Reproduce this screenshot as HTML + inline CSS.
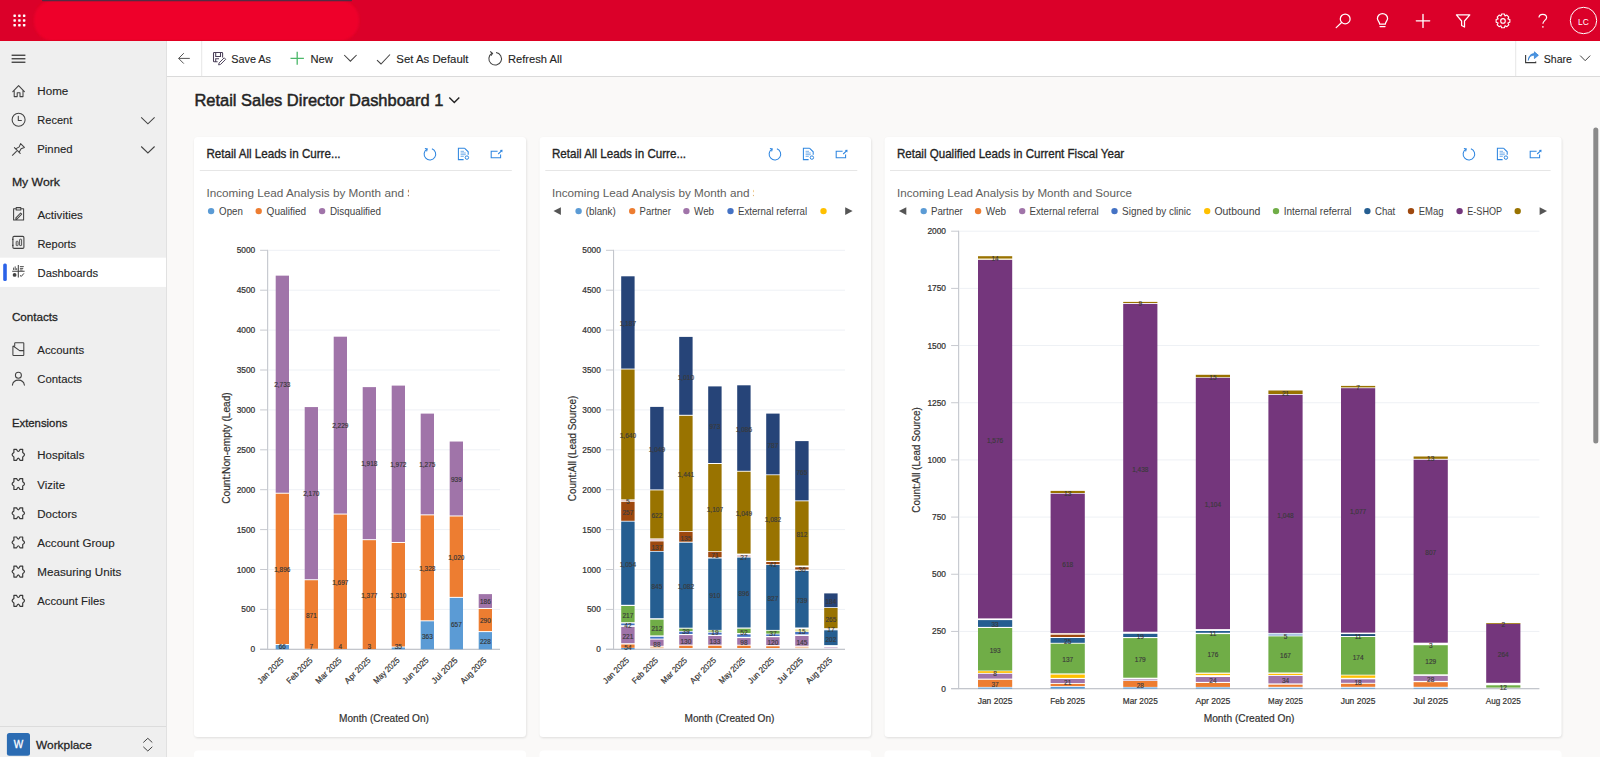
<!DOCTYPE html>
<html><head><meta charset="utf-8"><title>Dashboard</title>
<style>html,body{margin:0;padding:0;width:1600px;height:757px;overflow:hidden;background:#faf9f8}svg{display:block}text{font-family:"Liberation Sans",sans-serif}</style></head>
<body><svg width="1600" height="757" viewBox="0 0 1600 757" font-family="Liberation Sans, sans-serif"><defs><filter id="bl" x="-10%" y="-50%" width="120%" height="200%"><feGaussianBlur stdDeviation="1.2"/></filter><filter id="sh" x="-5%" y="-5%" width="110%" height="110%"><feGaussianBlur stdDeviation="1.2"/></filter></defs>
<rect x="0.00" y="0.00" width="1600.00" height="757.00" fill="#faf9f8"/>
<rect x="0.00" y="0.00" width="1600.00" height="41.00" fill="#db0029"/>
<rect x="34" y="0" width="325" height="41" rx="20" fill="#ee0629" filter="url(#bl)"/>
<rect x="42" y="-0.3" width="310" height="1.6" rx="0.8" fill="#383248" opacity="0.85"/>
<rect x="0.00" y="40.30" width="1600.00" height="0.80" fill="#de0020"/>
<rect x="13.40" y="14.40" width="2.5" height="2.5" rx="0.6" fill="#fff"/>
<rect x="13.40" y="19.15" width="2.5" height="2.5" rx="0.6" fill="#fff"/>
<rect x="13.40" y="23.90" width="2.5" height="2.5" rx="0.6" fill="#fff"/>
<rect x="18.15" y="14.40" width="2.5" height="2.5" rx="0.6" fill="#fff"/>
<rect x="18.15" y="19.15" width="2.5" height="2.5" rx="0.6" fill="#fff"/>
<rect x="18.15" y="23.90" width="2.5" height="2.5" rx="0.6" fill="#fff"/>
<rect x="22.90" y="14.40" width="2.5" height="2.5" rx="0.6" fill="#fff"/>
<rect x="22.90" y="19.15" width="2.5" height="2.5" rx="0.6" fill="#fff"/>
<rect x="22.90" y="23.90" width="2.5" height="2.5" rx="0.6" fill="#fff"/>
<g stroke="#fff" stroke-width="1.25" fill="none" stroke-linecap="round"><circle cx="1345.2" cy="18.9" r="4.9"/><path d="M1341.6 22.5 L1336.2 27.6"/><path d="M1379.7 24 C1379.4 21.6 1377.4 20.6 1377.4 18.6 A5.1 5.1 0 0 1 1387.6 18.6 C1387.6 20.6 1385.6 21.6 1385.3 24 Z"/><path d="M1380 26.6 H1385"/><path d="M1423 14.3 V27.4 M1416.3 20.85 H1429.7" stroke-width="1.35"/><path d="M1456.4 14.9 H1469.8 L1464.5 21 V27 L1461.6 25.5 V21 Z" stroke-linejoin="round"/></g>
<polygon points="1509.86,19.51 1509.86,22.29 1507.90,22.93 1508.83,24.77 1506.87,26.73 1505.03,25.80 1504.39,27.76 1501.61,27.76 1500.97,25.80 1499.13,26.73 1497.17,24.77 1498.10,22.93 1496.14,22.29 1496.14,19.51 1498.10,18.87 1497.17,17.03 1499.13,15.07 1500.97,16.00 1501.61,14.04 1504.39,14.04 1505.03,16.00 1506.87,15.07 1508.83,17.03 1507.90,18.87" stroke="#fff" stroke-width="1.1" fill="none" stroke-linejoin="round"/>
<circle cx="1503" cy="20.9" r="2.3" stroke="#fff" stroke-width="1.1" fill="none"/>
<path d="M1539 17.6 C1539 15.4 1540.6 14.3 1542.7 14.3 C1544.9 14.3 1546.6 15.6 1546.6 17.5 C1546.6 20.3 1542.9 20.6 1542.9 23.8" stroke="#fff" stroke-width="1.2" fill="none"/><circle cx="1542.9" cy="26.9" r="0.8" fill="#fff"/>
<circle cx="1583.5" cy="20.5" r="13.2" stroke="#fff" stroke-width="1" fill="none"/>
<text x="1583.4" y="25.2" font-size="9.6" fill="#fff" text-anchor="middle" textLength="10.8" lengthAdjust="spacingAndGlyphs">LC</text>
<rect x="0.00" y="41.00" width="166.00" height="716.00" fill="#efefef"/>
<rect x="166.00" y="41.00" width="1.00" height="716.00" fill="#e1e1e1"/>
<rect x="11.60" y="54.60" width="13.80" height="1.30" fill="#3a3a3a"/>
<rect x="11.60" y="58.10" width="13.80" height="1.30" fill="#3a3a3a"/>
<rect x="11.60" y="61.60" width="13.80" height="1.30" fill="#3a3a3a"/>
<rect x="0.00" y="257.70" width="166.00" height="29.20" fill="#ffffff"/>
<rect x="3.2" y="263.5" width="3.6" height="17.5" rx="1.5" fill="#2b62e8"/>
<path d="M12.8 91.6 L18.6 85.6 L24.4 91.6 M14.2 90.3 V96.6 H17.2 V92.8 H20 V96.6 H23 V90.3" stroke="#424242" stroke-width="1.05" fill="none" stroke-linejoin="round" stroke-linecap="round"/>
<circle cx="18.6" cy="119.8" r="6.5" stroke="#424242" stroke-width="1.05" fill="none" stroke-linejoin="round" stroke-linecap="round"/>
<path d="M18.3 116.2 V120.4 H21.4" stroke="#424242" stroke-width="1.05" fill="none" stroke-linejoin="round" stroke-linecap="round"/>
<path d="M12.4 155.3 L16.4 151.3 M14.4 147.6 L20.2 153.4 M15.7 148.9 L19.2 146.9 L20.6 143.6 L24.4 147.4 L21.1 148.8 L19.1 152.3" stroke="#424242" stroke-width="1.05" fill="none" stroke-linejoin="round" stroke-linecap="round"/>
<path d="M16 208.8 H13.6 V220 H23.6 V208.8 H21 M16.2 207.6 H20.8 V210 H16.2 Z M15.9 217.9 L20.6 213 L21.7 214.1 L17 219 H15.9 Z" stroke="#424242" stroke-width="1.05" fill="none" stroke-linejoin="round" stroke-linecap="round"/>
<rect x="12.9" y="236.4" width="11" height="12" rx="1.2" stroke="#424242" stroke-width="1.1" fill="none"/>
<rect x="16.2" y="241.3" width="1.9" height="4.3" rx="0.5" stroke="#424242" stroke-width="0.9" fill="none"/>
<rect x="19.6" y="239.2" width="2" height="6.4" rx="0.5" stroke="#424242" stroke-width="0.9" fill="none"/>
<path d="M12 239.4 H13.4 M12 245.4 H13.4" stroke="#424242" stroke-width="1.1"/>
<path d="M18.3 265 V277.6 M12.2 271.2 H24.6" stroke="#424242" stroke-width="1.05" fill="none"/>
<path d="M13.6 270 V267.6 M15.2 270 V266.4 M16.7 270 V268.2 M19.9 266.6 H23.8 M19.9 268.4 H23.2 M19.9 270 H22.6" stroke="#424242" stroke-width="0.9" fill="none"/>
<circle cx="14.6" cy="274.9" r="1.9" fill="#424242"/>
<path d="M20 275.4 L21.3 276.4 L23.9 273.4" stroke="#424242" stroke-width="1" fill="none"/>
<path d="M14.7 345.8 V343.3 Q14.7 342.7 15.3 342.7 H23.2 Q23.8 342.7 23.8 343.3 V350.6 M12.9 346.3 V354.7 Q12.9 355.4 13.6 355.4 H23.1 Q23.8 355.4 23.8 354.7 V350.6 H19.6 L13.2 346.0 Z" stroke="#424242" stroke-width="1.05" fill="none" stroke-linejoin="round" stroke-linecap="round"/>
<circle cx="18.4" cy="375.2" r="3.0" stroke="#424242" stroke-width="1.05" fill="none" stroke-linejoin="round" stroke-linecap="round"/>
<path d="M12.4 385.2 C12.9 381.8 15.2 380.1 18.4 380.1 C21.6 380.1 23.9 381.8 24.4 385.2" stroke="#424242" stroke-width="1.05" fill="none" stroke-linejoin="round" stroke-linecap="round"/>
<path d="M13.9 449.4 H16.6 Q18.3 453.59999999999997 20.0 449.4 H22.7 V452.59999999999997 Q26.3 454.84999999999997 22.7 456.9 V460.29999999999995 H20.0 Q18.3 456.0 16.6 460.29999999999995 H13.9 V456.9 Q10.3 454.84999999999997 13.9 452.59999999999997 Z" stroke="#3a3a3a" stroke-width="1.2" fill="none" stroke-linejoin="round"/>
<path d="M13.9 478.6 H16.6 Q18.3 482.8 20.0 478.6 H22.7 V481.8 Q26.3 484.05 22.7 486.1 V489.5 H20.0 Q18.3 485.20000000000005 16.6 489.5 H13.9 V486.1 Q10.3 484.05 13.9 481.8 Z" stroke="#3a3a3a" stroke-width="1.2" fill="none" stroke-linejoin="round"/>
<path d="M13.9 507.8 H16.6 Q18.3 512.0 20.0 507.8 H22.7 V511.0 Q26.3 513.25 22.7 515.3 V518.7 H20.0 Q18.3 514.4 16.6 518.7 H13.9 V515.3 Q10.3 513.25 13.9 511.0 Z" stroke="#3a3a3a" stroke-width="1.2" fill="none" stroke-linejoin="round"/>
<path d="M13.9 537.0 H16.6 Q18.3 541.2 20.0 537.0 H22.7 V540.2 Q26.3 542.45 22.7 544.5 V547.9 H20.0 Q18.3 543.6 16.6 547.9 H13.9 V544.5 Q10.3 542.45 13.9 540.2 Z" stroke="#3a3a3a" stroke-width="1.2" fill="none" stroke-linejoin="round"/>
<path d="M13.9 566.2 H16.6 Q18.3 570.4000000000001 20.0 566.2 H22.7 V569.4000000000001 Q26.3 571.6500000000001 22.7 573.7 V577.1 H20.0 Q18.3 572.8000000000001 16.6 577.1 H13.9 V573.7 Q10.3 571.6500000000001 13.9 569.4000000000001 Z" stroke="#3a3a3a" stroke-width="1.2" fill="none" stroke-linejoin="round"/>
<path d="M13.9 595.4 H16.6 Q18.3 599.6 20.0 595.4 H22.7 V598.6 Q26.3 600.85 22.7 602.9 V606.3 H20.0 Q18.3 602.0 16.6 606.3 H13.9 V602.9 Q10.3 600.85 13.9 598.6 Z" stroke="#3a3a3a" stroke-width="1.2" fill="none" stroke-linejoin="round"/>
<path d="M141.2 117.3 L147.9 123.8 L154.6 117.3" stroke="#424242" stroke-width="1.05" fill="none"/>
<path d="M141.2 146.5 L147.9 153.0 L154.6 146.5" stroke="#424242" stroke-width="1.05" fill="none"/>
<text x="37.3" y="95.3" font-size="11.67" fill="#242424" stroke="#242424" stroke-width="0.12" text-anchor="start" textLength="31" lengthAdjust="spacingAndGlyphs">Home</text>
<text x="37.3" y="123.8" font-size="11.67" fill="#242424" stroke="#242424" stroke-width="0.12" text-anchor="start" textLength="34.9" lengthAdjust="spacingAndGlyphs">Recent</text>
<text x="37.3" y="153.2" font-size="11.67" fill="#242424" stroke="#242424" stroke-width="0.12" text-anchor="start" textLength="35.2" lengthAdjust="spacingAndGlyphs">Pinned</text>
<text x="11.9" y="186.0" font-size="11.67" fill="#242424" stroke="#242424" stroke-width="0.28" text-anchor="start" textLength="48" lengthAdjust="spacingAndGlyphs">My Work</text>
<text x="37.4" y="218.7" font-size="11.67" fill="#242424" stroke="#242424" stroke-width="0.12" text-anchor="start" textLength="45.5" lengthAdjust="spacingAndGlyphs">Activities</text>
<text x="37.4" y="247.8" font-size="11.67" fill="#242424" stroke="#242424" stroke-width="0.12" text-anchor="start" textLength="38.7" lengthAdjust="spacingAndGlyphs">Reports</text>
<text x="37.6" y="276.8" font-size="11.67" fill="#242424" stroke="#242424" stroke-width="0.12" text-anchor="start" textLength="60.5" lengthAdjust="spacingAndGlyphs">Dashboards</text>
<text x="11.9" y="321.0" font-size="11.67" fill="#242424" stroke="#242424" stroke-width="0.28" text-anchor="start" textLength="46" lengthAdjust="spacingAndGlyphs">Contacts</text>
<text x="37.3" y="353.6" font-size="11.67" fill="#242424" stroke="#242424" stroke-width="0.12" text-anchor="start" textLength="46.8" lengthAdjust="spacingAndGlyphs">Accounts</text>
<text x="37.3" y="382.9" font-size="11.67" fill="#242424" stroke="#242424" stroke-width="0.12" text-anchor="start" textLength="44.7" lengthAdjust="spacingAndGlyphs">Contacts</text>
<text x="11.9" y="427.2" font-size="11.67" fill="#242424" stroke="#242424" stroke-width="0.28" text-anchor="start" textLength="55.5" lengthAdjust="spacingAndGlyphs">Extensions</text>
<text x="37.3" y="459.3" font-size="11.67" fill="#242424" stroke="#242424" stroke-width="0.12" text-anchor="start" textLength="47.1" lengthAdjust="spacingAndGlyphs">Hospitals</text>
<text x="37.3" y="488.5" font-size="11.67" fill="#242424" stroke="#242424" stroke-width="0.12" text-anchor="start" textLength="27.7" lengthAdjust="spacingAndGlyphs">Vizite</text>
<text x="37.3" y="517.7" font-size="11.67" fill="#242424" stroke="#242424" stroke-width="0.12" text-anchor="start" textLength="39.7" lengthAdjust="spacingAndGlyphs">Doctors</text>
<text x="37.3" y="546.9" font-size="11.67" fill="#242424" stroke="#242424" stroke-width="0.12" text-anchor="start" textLength="77.4" lengthAdjust="spacingAndGlyphs">Account Group</text>
<text x="37.3" y="576.1" font-size="11.67" fill="#242424" stroke="#242424" stroke-width="0.12" text-anchor="start" textLength="84" lengthAdjust="spacingAndGlyphs">Measuring Units</text>
<text x="37.3" y="605.3" font-size="11.67" fill="#242424" stroke="#242424" stroke-width="0.12" text-anchor="start" textLength="67.5" lengthAdjust="spacingAndGlyphs">Account Files</text>
<rect x="0.00" y="726.00" width="166.00" height="1.00" fill="#dcdcdc"/>
<rect x="6.9" y="733" width="23.1" height="22.8" rx="2.5" fill="#2b6cb3"/>
<text x="18.45" y="747.8" font-size="10" fill="#fff" stroke="#fff" stroke-width="0.28" text-anchor="middle">W</text>
<text x="36.1" y="748.9" font-size="11.67" fill="#242424" stroke="#242424" stroke-width="0.28" text-anchor="start" textLength="55.8" lengthAdjust="spacingAndGlyphs">Workplace</text>
<path d="M143.3 742.5 L147.8 738.3 L152.3 742.5 M143.3 746.8 L147.8 751 L152.3 746.8" stroke="#424242" stroke-width="1" fill="none"/>
<rect x="167.00" y="41.00" width="1433.00" height="35.20" fill="#ffffff"/>
<rect x="167.00" y="76.00" width="1433.00" height="1.00" fill="#dadada"/>
<rect x="201.30" y="41.00" width="0.90" height="35.20" fill="#e3e3e3"/>
<rect x="1515.30" y="41.00" width="0.90" height="35.20" fill="#e3e3e3"/>
<path d="M178.6 58.4 H189.8 M183.8 53.2 L178.6 58.4 L183.8 63.6" stroke="#555" stroke-width="1" fill="none"/>
<path d="M222.6 57.6 V53.3 Q222.6 52.5 221.8 52.5 H214.3 Q213.5 52.5 213.5 53.3 V61 Q213.5 61.8 214.3 61.8 H217.6 M215.7 52.5 V56.4 H220.5 V52.5 M215.7 61.8 V58.7 H219" stroke="#4a3f58" stroke-width="1.05" fill="none"/>
<path d="M218.6 64.9 L219.1 62.9 L224.2 57.8 L225.7 59.3 L220.6 64.4 Z" stroke="#4a3f58" stroke-width="0.95" fill="none" stroke-linejoin="round"/>
<text x="231.3" y="63.4" font-size="11.67" fill="#242424" stroke="#242424" stroke-width="0.12" text-anchor="start" textLength="39.7" lengthAdjust="spacingAndGlyphs">Save As</text>
<path d="M297.2 51.8 V64.8 M290.5 58.3 H303.9" stroke="#4cb86a" stroke-width="1.3"/>
<text x="310.5" y="63.4" font-size="11.67" fill="#242424" stroke="#242424" stroke-width="0.12" text-anchor="start" textLength="22.3" lengthAdjust="spacingAndGlyphs">New</text>
<path d="M344.2 55 L350.4 61.2 L356.6 55" stroke="#424242" stroke-width="1.05" fill="none"/>
<path d="M377 60.2 L381 64 L390 54.5" stroke="#424242" stroke-width="1.05" fill="none"/>
<text x="396.3" y="63.4" font-size="11.67" fill="#242424" stroke="#242424" stroke-width="0.12" text-anchor="start" textLength="72.2" lengthAdjust="spacingAndGlyphs">Set As Default</text>
<path d="M492 53.3 A6.3 6.3 0 1 0 496 52.5" stroke="#424242" stroke-width="1.05" fill="none"/><path d="M490.2 51.5 L492.6 53.4 L490.9 55.8" stroke="#424242" stroke-width="1.05" fill="none"/>
<text x="508" y="63.4" font-size="11.67" fill="#242424" stroke="#242424" stroke-width="0.12" text-anchor="start" textLength="53.9" lengthAdjust="spacingAndGlyphs">Refresh All</text>
<path d="M1525.6 55 V62.6 H1535.7 V61.6" stroke="#3a3a3a" stroke-width="1.1" fill="none"/>
<path d="M1528.3 60.4 C1529 56.6 1531.3 55.3 1534.4 55.3 V58.6 L1538.4 55.3 L1534.4 51.8 V53.6 C1530.8 53.6 1528.5 56.4 1528.3 60.4 Z" fill="#4a95e3" stroke="#2b7bd0" stroke-width="0.7" stroke-linejoin="round"/>
<text x="1543.8" y="63.0" font-size="11.67" fill="#242424" stroke="#242424" stroke-width="0.12" text-anchor="start" textLength="28.2" lengthAdjust="spacingAndGlyphs">Share</text>
<path d="M1580.2 55.6 L1585.2 60.7 L1590.2 55.6" stroke="#424242" stroke-width="1" fill="none"/>
<text x="194.4" y="106.0" font-size="16.67" fill="#242424" stroke="#242424" stroke-width="0.5" text-anchor="start" textLength="249" lengthAdjust="spacingAndGlyphs">Retail Sales Director Dashboard 1</text>
<path d="M449.3 97.5 L454.3 102.5 L459.3 97.5" stroke="#242424" stroke-width="1.4" fill="none"/>
<rect x="1593.3" y="127.4" width="5" height="316.2" rx="2.5" fill="#8a8a8a"/>
<rect x="194.5" y="138" width="332" height="600" rx="3.5" fill="#000" opacity="0.11" filter="url(#sh)"/>
<rect x="194" y="137" width="332" height="600" rx="3.5" fill="#fff"/>
<text x="206.40" y="158.30" font-size="12.6" fill="#242424" stroke="#242424" stroke-width="0.33" text-anchor="start" textLength="134.2" lengthAdjust="spacingAndGlyphs">Retail All Leads in Curre...</text>
<rect x="199.80" y="170.00" width="312.00" height="1.00" fill="#e6e6e6"/>
<path d="M426.90 149.20 A5.8 5.8 0 1 0 431.90 148.70" stroke="#2f86e0" stroke-width="1.05" fill="none"/>
<path d="M424.90 148.40 L427.30 148.90 L426.60 151.40" stroke="#2f86e0" stroke-width="1.05" fill="none"/>
<path d="M464.70 148.3 H458.40 V159.6 H463.60 M464.70 148.3 L468.20 151.8 V154.8" stroke="#2f86e0" stroke-width="1.05" fill="none"/>
<path d="M460.60 151.3 H464.00 M460.60 153.0 H465.80 M460.60 154.7 H465.80 M460.60 156.4 H463.80" stroke="#2f86e0" stroke-width="0.8" fill="none" opacity="0.8"/>
<circle cx="466.90" cy="157.6" r="1.7" stroke="#2f86e0" stroke-width="1" fill="none"/>
<path d="M497.60 151.2 H491.20 V157.7 H500.60 V154.4" stroke="#2f86e0" stroke-width="1.05" fill="none"/>
<path d="M498.20 154.0 L501.80 150.6" stroke="#2f86e0" stroke-width="1.05" fill="none"/>
<path d="M499.80 150.0 L502.50 149.8 L502.30 152.4 Z" fill="#2f86e0"/>
<clipPath id="c1"><rect x="200" y="180" width="209" height="25"/></clipPath>
<text x="206.40" y="197.40" font-size="11.67" fill="#605e5c" text-anchor="start" textLength="238" lengthAdjust="spacingAndGlyphs" clip-path="url(#c1)">Incoming Lead Analysis by Month and Source</text>
<circle cx="211.10" cy="211.1" r="3.2" fill="#5b9bd5"/>
<text x="219.10" y="214.80" font-size="11.2" fill="#424242" text-anchor="start" textLength="23.7" lengthAdjust="spacingAndGlyphs">Open</text>
<circle cx="258.70" cy="211.1" r="3.2" fill="#ed7d31"/>
<text x="266.60" y="214.80" font-size="11.2" fill="#424242" text-anchor="start" textLength="39.6" lengthAdjust="spacingAndGlyphs">Qualified</text>
<circle cx="322.10" cy="211.1" r="3.2" fill="#a074a9"/>
<text x="330.00" y="214.80" font-size="11.2" fill="#424242" text-anchor="start" textLength="51" lengthAdjust="spacingAndGlyphs">Disqualified</text>
<rect x="260.10" y="648.80" width="7.50" height="1.00" fill="#c8cad0"/>
<text x="255.20" y="652.30" font-size="8.33" fill="#323130" stroke="#323130" stroke-width="0.22" text-anchor="end">0</text>
<rect x="268.60" y="608.90" width="231.40" height="1.00" fill="#eef1f5"/>
<rect x="260.10" y="608.90" width="7.50" height="1.00" fill="#c8cad0"/>
<text x="255.20" y="612.40" font-size="8.33" fill="#323130" stroke="#323130" stroke-width="0.22" text-anchor="end">500</text>
<rect x="268.60" y="569.00" width="231.40" height="1.00" fill="#eef1f5"/>
<rect x="260.10" y="569.00" width="7.50" height="1.00" fill="#c8cad0"/>
<text x="255.20" y="572.50" font-size="8.33" fill="#323130" stroke="#323130" stroke-width="0.22" text-anchor="end">1000</text>
<rect x="268.60" y="529.10" width="231.40" height="1.00" fill="#eef1f5"/>
<rect x="260.10" y="529.10" width="7.50" height="1.00" fill="#c8cad0"/>
<text x="255.20" y="532.60" font-size="8.33" fill="#323130" stroke="#323130" stroke-width="0.22" text-anchor="end">1500</text>
<rect x="268.60" y="489.20" width="231.40" height="1.00" fill="#eef1f5"/>
<rect x="260.10" y="489.20" width="7.50" height="1.00" fill="#c8cad0"/>
<text x="255.20" y="492.70" font-size="8.33" fill="#323130" stroke="#323130" stroke-width="0.22" text-anchor="end">2000</text>
<rect x="268.60" y="449.30" width="231.40" height="1.00" fill="#eef1f5"/>
<rect x="260.10" y="449.30" width="7.50" height="1.00" fill="#c8cad0"/>
<text x="255.20" y="452.80" font-size="8.33" fill="#323130" stroke="#323130" stroke-width="0.22" text-anchor="end">2500</text>
<rect x="268.60" y="409.40" width="231.40" height="1.00" fill="#eef1f5"/>
<rect x="260.10" y="409.40" width="7.50" height="1.00" fill="#c8cad0"/>
<text x="255.20" y="412.90" font-size="8.33" fill="#323130" stroke="#323130" stroke-width="0.22" text-anchor="end">3000</text>
<rect x="268.60" y="369.50" width="231.40" height="1.00" fill="#eef1f5"/>
<rect x="260.10" y="369.50" width="7.50" height="1.00" fill="#c8cad0"/>
<text x="255.20" y="373.00" font-size="8.33" fill="#323130" stroke="#323130" stroke-width="0.22" text-anchor="end">3500</text>
<rect x="268.60" y="329.60" width="231.40" height="1.00" fill="#eef1f5"/>
<rect x="260.10" y="329.60" width="7.50" height="1.00" fill="#c8cad0"/>
<text x="255.20" y="333.10" font-size="8.33" fill="#323130" stroke="#323130" stroke-width="0.22" text-anchor="end">4000</text>
<rect x="268.60" y="289.70" width="231.40" height="1.00" fill="#eef1f5"/>
<rect x="260.10" y="289.70" width="7.50" height="1.00" fill="#c8cad0"/>
<text x="255.20" y="293.20" font-size="8.33" fill="#323130" stroke="#323130" stroke-width="0.22" text-anchor="end">4500</text>
<rect x="268.60" y="249.80" width="231.40" height="1.00" fill="#eef1f5"/>
<rect x="260.10" y="249.80" width="7.50" height="1.00" fill="#c8cad0"/>
<text x="255.20" y="253.30" font-size="8.33" fill="#323130" stroke="#323130" stroke-width="0.22" text-anchor="end">5000</text>
<rect x="267.10" y="249.80" width="1.10" height="400.00" fill="#c3c6cc"/>
<rect x="260.10" y="648.70" width="239.90" height="1.30" fill="#c3c6cc"/>
<rect x="275.70" y="645.03" width="13.30" height="4.27" fill="#5b9bd5"/>
<rect x="275.70" y="493.73" width="13.30" height="150.30" fill="#ed7d31"/>
<rect x="275.70" y="275.64" width="13.30" height="217.09" fill="#a074a9"/>
<text x="282.35" y="648.60" font-size="6.5" fill="#333" stroke="#333" stroke-width="0.15" text-anchor="middle">66</text>
<text x="282.35" y="572.18" font-size="6.5" fill="#333" stroke="#333" stroke-width="0.15" text-anchor="middle">1,896</text>
<text x="282.35" y="387.49" font-size="6.5" fill="#333" stroke="#333" stroke-width="0.15" text-anchor="middle">2,733</text>
<rect x="304.70" y="580.24" width="13.30" height="68.51" fill="#ed7d31"/>
<rect x="304.70" y="407.07" width="13.30" height="172.17" fill="#a074a9"/>
<text x="311.35" y="648.60" font-size="6.5" fill="#333" stroke="#333" stroke-width="0.15" text-anchor="middle">7</text>
<text x="311.35" y="617.79" font-size="6.5" fill="#333" stroke="#333" stroke-width="0.15" text-anchor="middle">871</text>
<text x="311.35" y="496.45" font-size="6.5" fill="#333" stroke="#333" stroke-width="0.15" text-anchor="middle">2,170</text>
<rect x="333.70" y="514.56" width="13.30" height="134.42" fill="#ed7d31"/>
<rect x="333.70" y="336.69" width="13.30" height="176.87" fill="#a074a9"/>
<text x="340.35" y="648.60" font-size="6.5" fill="#333" stroke="#333" stroke-width="0.15" text-anchor="middle">4</text>
<text x="340.35" y="585.07" font-size="6.5" fill="#333" stroke="#333" stroke-width="0.15" text-anchor="middle">1,697</text>
<text x="340.35" y="428.42" font-size="6.5" fill="#333" stroke="#333" stroke-width="0.15" text-anchor="middle">2,229</text>
<rect x="362.70" y="540.18" width="13.30" height="108.88" fill="#ed7d31"/>
<rect x="362.70" y="387.12" width="13.30" height="152.06" fill="#a074a9"/>
<text x="369.35" y="648.60" font-size="6.5" fill="#333" stroke="#333" stroke-width="0.15" text-anchor="middle">3</text>
<text x="369.35" y="597.92" font-size="6.5" fill="#333" stroke="#333" stroke-width="0.15" text-anchor="middle">1,377</text>
<text x="369.35" y="466.45" font-size="6.5" fill="#333" stroke="#333" stroke-width="0.15" text-anchor="middle">1,918</text>
<rect x="391.70" y="647.51" width="13.30" height="1.79" fill="#5b9bd5"/>
<rect x="391.70" y="542.97" width="13.30" height="103.54" fill="#ed7d31"/>
<rect x="391.70" y="385.60" width="13.30" height="156.37" fill="#a074a9"/>
<text x="398.35" y="648.60" font-size="6.5" fill="#333" stroke="#333" stroke-width="0.15" text-anchor="middle">35</text>
<text x="398.35" y="598.04" font-size="6.5" fill="#333" stroke="#333" stroke-width="0.15" text-anchor="middle">1,310</text>
<text x="398.35" y="467.09" font-size="6.5" fill="#333" stroke="#333" stroke-width="0.15" text-anchor="middle">1,972</text>
<rect x="420.70" y="621.33" width="13.30" height="27.97" fill="#5b9bd5"/>
<rect x="420.70" y="515.36" width="13.30" height="104.97" fill="#ed7d31"/>
<rect x="420.70" y="413.61" width="13.30" height="100.75" fill="#a074a9"/>
<text x="427.35" y="638.62" font-size="6.5" fill="#333" stroke="#333" stroke-width="0.15" text-anchor="middle">363</text>
<text x="427.35" y="571.15" font-size="6.5" fill="#333" stroke="#333" stroke-width="0.15" text-anchor="middle">1,328</text>
<text x="427.35" y="467.29" font-size="6.5" fill="#333" stroke="#333" stroke-width="0.15" text-anchor="middle">1,275</text>
<rect x="449.70" y="597.87" width="13.30" height="51.43" fill="#5b9bd5"/>
<rect x="449.70" y="516.48" width="13.30" height="80.40" fill="#ed7d31"/>
<rect x="449.70" y="441.54" width="13.30" height="73.93" fill="#a074a9"/>
<text x="456.35" y="626.89" font-size="6.5" fill="#333" stroke="#333" stroke-width="0.15" text-anchor="middle">657</text>
<text x="456.35" y="559.97" font-size="6.5" fill="#333" stroke="#333" stroke-width="0.15" text-anchor="middle">1,020</text>
<text x="456.35" y="481.81" font-size="6.5" fill="#333" stroke="#333" stroke-width="0.15" text-anchor="middle">939</text>
<rect x="478.70" y="632.11" width="13.30" height="17.19" fill="#5b9bd5"/>
<rect x="478.70" y="608.96" width="13.30" height="22.14" fill="#ed7d31"/>
<rect x="478.70" y="594.12" width="13.30" height="13.84" fill="#a074a9"/>
<text x="485.35" y="644.00" font-size="6.5" fill="#333" stroke="#333" stroke-width="0.15" text-anchor="middle">228</text>
<text x="485.35" y="623.33" font-size="6.5" fill="#333" stroke="#333" stroke-width="0.15" text-anchor="middle">290</text>
<text x="485.35" y="604.34" font-size="6.5" fill="#333" stroke="#333" stroke-width="0.15" text-anchor="middle">186</text>
<text x="284.15" y="660.80" font-size="8.33" fill="#323130" stroke="#323130" stroke-width="0.2" text-anchor="end" textLength="33.0" lengthAdjust="spacingAndGlyphs" transform="rotate(-45 284.15 660.8)">Jan 2025</text>
<text x="313.15" y="660.80" font-size="8.33" fill="#323130" stroke="#323130" stroke-width="0.2" text-anchor="end" textLength="33.0" lengthAdjust="spacingAndGlyphs" transform="rotate(-45 313.15 660.8)">Feb 2025</text>
<text x="342.15" y="660.80" font-size="8.33" fill="#323130" stroke="#323130" stroke-width="0.2" text-anchor="end" textLength="33.0" lengthAdjust="spacingAndGlyphs" transform="rotate(-45 342.15 660.8)">Mar 2025</text>
<text x="371.15" y="660.80" font-size="8.33" fill="#323130" stroke="#323130" stroke-width="0.2" text-anchor="end" textLength="33.0" lengthAdjust="spacingAndGlyphs" transform="rotate(-45 371.15 660.8)">Apr 2025</text>
<text x="400.15" y="660.80" font-size="8.33" fill="#323130" stroke="#323130" stroke-width="0.2" text-anchor="end" textLength="33.0" lengthAdjust="spacingAndGlyphs" transform="rotate(-45 400.15 660.8)">May 2025</text>
<text x="429.15" y="660.80" font-size="8.33" fill="#323130" stroke="#323130" stroke-width="0.2" text-anchor="end" textLength="33.0" lengthAdjust="spacingAndGlyphs" transform="rotate(-45 429.15 660.8)">Jun 2025</text>
<text x="458.15" y="660.80" font-size="8.33" fill="#323130" stroke="#323130" stroke-width="0.2" text-anchor="end" textLength="33.0" lengthAdjust="spacingAndGlyphs" transform="rotate(-45 458.15 660.8)">Jul 2025</text>
<text x="487.15" y="660.80" font-size="8.33" fill="#323130" stroke="#323130" stroke-width="0.2" text-anchor="end" textLength="33.0" lengthAdjust="spacingAndGlyphs" transform="rotate(-45 487.15 660.8)">Aug 2025</text>
<text x="230.30" y="448.00" font-size="10.83" fill="#323130" stroke="#323130" stroke-width="0.2" text-anchor="middle" textLength="111.5" lengthAdjust="spacingAndGlyphs" transform="rotate(-90 230.3 448)">Count:Non-empty (Lead)</text>
<text x="384.00" y="722.20" font-size="10.83" fill="#323130" stroke="#323130" stroke-width="0.2" text-anchor="middle" textLength="90" lengthAdjust="spacingAndGlyphs">Month (Created On)</text>
<rect x="540.0" y="138" width="331.5" height="600" rx="3.5" fill="#000" opacity="0.11" filter="url(#sh)"/>
<rect x="539.5" y="137" width="331.5" height="600" rx="3.5" fill="#fff"/>
<text x="551.90" y="158.30" font-size="12.6" fill="#242424" stroke="#242424" stroke-width="0.33" text-anchor="start" textLength="134.2" lengthAdjust="spacingAndGlyphs">Retail All Leads in Curre...</text>
<rect x="545.30" y="170.00" width="312.00" height="1.00" fill="#e6e6e6"/>
<path d="M771.90 149.20 A5.8 5.8 0 1 0 776.90 148.70" stroke="#2f86e0" stroke-width="1.05" fill="none"/>
<path d="M769.90 148.40 L772.30 148.90 L771.60 151.40" stroke="#2f86e0" stroke-width="1.05" fill="none"/>
<path d="M809.70 148.3 H803.40 V159.6 H808.60 M809.70 148.3 L813.20 151.8 V154.8" stroke="#2f86e0" stroke-width="1.05" fill="none"/>
<path d="M805.60 151.3 H809.00 M805.60 153.0 H810.80 M805.60 154.7 H810.80 M805.60 156.4 H808.80" stroke="#2f86e0" stroke-width="0.8" fill="none" opacity="0.8"/>
<circle cx="811.90" cy="157.6" r="1.7" stroke="#2f86e0" stroke-width="1" fill="none"/>
<path d="M842.60 151.2 H836.20 V157.7 H845.60 V154.4" stroke="#2f86e0" stroke-width="1.05" fill="none"/>
<path d="M843.20 154.0 L846.80 150.6" stroke="#2f86e0" stroke-width="1.05" fill="none"/>
<path d="M844.80 150.0 L847.50 149.8 L847.30 152.4 Z" fill="#2f86e0"/>
<clipPath id="c2"><rect x="545" y="180" width="209" height="25"/></clipPath>
<text x="551.90" y="197.40" font-size="11.67" fill="#605e5c" text-anchor="start" textLength="238" lengthAdjust="spacingAndGlyphs" clip-path="url(#c2)">Incoming Lead Analysis by Month and Source</text>
<path d="M553.5 211.1 L560.9 207.3 V214.9 Z" fill="#555"/>
<path d="M852.6 211.1 L845.2 207.3 V214.9 Z" fill="#555"/>
<circle cx="578.60" cy="211.1" r="3.2" fill="#5b9bd5"/>
<text x="585.70" y="214.80" font-size="11.2" fill="#424242" text-anchor="start" textLength="30.1" lengthAdjust="spacingAndGlyphs">(blank)</text>
<circle cx="632.20" cy="211.1" r="3.2" fill="#ed7d31"/>
<text x="639.60" y="214.80" font-size="11.2" fill="#424242" text-anchor="start" textLength="31.2" lengthAdjust="spacingAndGlyphs">Partner</text>
<circle cx="686.40" cy="211.1" r="3.2" fill="#a074a9"/>
<text x="694.00" y="214.80" font-size="11.2" fill="#424242" text-anchor="start" textLength="20.1" lengthAdjust="spacingAndGlyphs">Web</text>
<circle cx="730.50" cy="211.1" r="3.2" fill="#4472c4"/>
<text x="737.90" y="214.80" font-size="11.2" fill="#424242" text-anchor="start" textLength="69.2" lengthAdjust="spacingAndGlyphs">External referral</text>
<circle cx="823.50" cy="211.1" r="3.2" fill="#ffc000"/>
<rect x="606.00" y="648.80" width="7.50" height="1.00" fill="#c8cad0"/>
<text x="600.80" y="652.30" font-size="8.33" fill="#323130" stroke="#323130" stroke-width="0.22" text-anchor="end">0</text>
<rect x="614.50" y="608.90" width="230.50" height="1.00" fill="#eef1f5"/>
<rect x="606.00" y="608.90" width="7.50" height="1.00" fill="#c8cad0"/>
<text x="600.80" y="612.40" font-size="8.33" fill="#323130" stroke="#323130" stroke-width="0.22" text-anchor="end">500</text>
<rect x="614.50" y="569.00" width="230.50" height="1.00" fill="#eef1f5"/>
<rect x="606.00" y="569.00" width="7.50" height="1.00" fill="#c8cad0"/>
<text x="600.80" y="572.50" font-size="8.33" fill="#323130" stroke="#323130" stroke-width="0.22" text-anchor="end">1000</text>
<rect x="614.50" y="529.10" width="230.50" height="1.00" fill="#eef1f5"/>
<rect x="606.00" y="529.10" width="7.50" height="1.00" fill="#c8cad0"/>
<text x="600.80" y="532.60" font-size="8.33" fill="#323130" stroke="#323130" stroke-width="0.22" text-anchor="end">1500</text>
<rect x="614.50" y="489.20" width="230.50" height="1.00" fill="#eef1f5"/>
<rect x="606.00" y="489.20" width="7.50" height="1.00" fill="#c8cad0"/>
<text x="600.80" y="492.70" font-size="8.33" fill="#323130" stroke="#323130" stroke-width="0.22" text-anchor="end">2000</text>
<rect x="614.50" y="449.30" width="230.50" height="1.00" fill="#eef1f5"/>
<rect x="606.00" y="449.30" width="7.50" height="1.00" fill="#c8cad0"/>
<text x="600.80" y="452.80" font-size="8.33" fill="#323130" stroke="#323130" stroke-width="0.22" text-anchor="end">2500</text>
<rect x="614.50" y="409.40" width="230.50" height="1.00" fill="#eef1f5"/>
<rect x="606.00" y="409.40" width="7.50" height="1.00" fill="#c8cad0"/>
<text x="600.80" y="412.90" font-size="8.33" fill="#323130" stroke="#323130" stroke-width="0.22" text-anchor="end">3000</text>
<rect x="614.50" y="369.50" width="230.50" height="1.00" fill="#eef1f5"/>
<rect x="606.00" y="369.50" width="7.50" height="1.00" fill="#c8cad0"/>
<text x="600.80" y="373.00" font-size="8.33" fill="#323130" stroke="#323130" stroke-width="0.22" text-anchor="end">3500</text>
<rect x="614.50" y="329.60" width="230.50" height="1.00" fill="#eef1f5"/>
<rect x="606.00" y="329.60" width="7.50" height="1.00" fill="#c8cad0"/>
<text x="600.80" y="333.10" font-size="8.33" fill="#323130" stroke="#323130" stroke-width="0.22" text-anchor="end">4000</text>
<rect x="614.50" y="289.70" width="230.50" height="1.00" fill="#eef1f5"/>
<rect x="606.00" y="289.70" width="7.50" height="1.00" fill="#c8cad0"/>
<text x="600.80" y="293.20" font-size="8.33" fill="#323130" stroke="#323130" stroke-width="0.22" text-anchor="end">4500</text>
<rect x="614.50" y="249.80" width="230.50" height="1.00" fill="#eef1f5"/>
<rect x="606.00" y="249.80" width="7.50" height="1.00" fill="#c8cad0"/>
<text x="600.80" y="253.30" font-size="8.33" fill="#323130" stroke="#323130" stroke-width="0.22" text-anchor="end">5000</text>
<rect x="613.00" y="249.80" width="1.10" height="400.00" fill="#c3c6cc"/>
<rect x="606.00" y="648.70" width="239.00" height="1.30" fill="#c3c6cc"/>
<rect x="621.20" y="648.00" width="13.40" height="1.30" fill="#5b9bd5"/>
<rect x="621.20" y="644.50" width="13.40" height="3.30" fill="#ed7d31"/>
<rect x="621.20" y="626.90" width="13.40" height="16.30" fill="#a074a9"/>
<rect x="621.20" y="623.50" width="13.40" height="1.70" fill="#4472c4"/>
<rect x="621.20" y="606.00" width="13.40" height="16.20" fill="#70ad47"/>
<rect x="621.20" y="521.60" width="13.40" height="83.20" fill="#255e91"/>
<rect x="621.20" y="501.80" width="13.40" height="19.00" fill="#9e480e"/>
<rect x="621.20" y="500.00" width="13.40" height="1.20" fill="#e9cdd0"/>
<rect x="621.20" y="369.50" width="13.40" height="129.90" fill="#997300"/>
<rect x="621.20" y="276.30" width="13.40" height="92.30" fill="#264478"/>
<rect x="650.20" y="646.60" width="13.40" height="1.80" fill="#f6c9a8"/>
<rect x="650.20" y="639.60" width="13.40" height="6.20" fill="#a074a9"/>
<rect x="650.20" y="636.80" width="13.40" height="1.80" fill="#4472c4"/>
<rect x="650.20" y="619.60" width="13.40" height="15.80" fill="#70ad47"/>
<rect x="650.20" y="551.70" width="13.40" height="66.50" fill="#255e91"/>
<rect x="650.20" y="541.40" width="13.40" height="9.60" fill="#9e480e"/>
<rect x="650.20" y="539.00" width="13.40" height="1.80" fill="#e9cdd0"/>
<rect x="650.20" y="490.40" width="13.40" height="48.00" fill="#997300"/>
<rect x="650.20" y="406.90" width="13.40" height="82.50" fill="#264478"/>
<rect x="679.20" y="645.70" width="13.40" height="2.30" fill="#ed7d31"/>
<rect x="679.20" y="635.10" width="13.40" height="9.60" fill="#a074a9"/>
<rect x="679.20" y="631.70" width="13.40" height="2.30" fill="#4472c4"/>
<rect x="679.20" y="628.70" width="13.40" height="2.30" fill="#70ad47"/>
<rect x="679.20" y="542.70" width="13.40" height="85.00" fill="#255e91"/>
<rect x="679.20" y="531.90" width="13.40" height="9.80" fill="#9e480e"/>
<rect x="679.20" y="415.80" width="13.40" height="115.30" fill="#997300"/>
<rect x="679.20" y="336.90" width="13.40" height="77.90" fill="#264478"/>
<rect x="708.20" y="645.70" width="13.40" height="2.30" fill="#ed7d31"/>
<rect x="708.20" y="636.00" width="13.40" height="8.70" fill="#a074a9"/>
<rect x="708.20" y="632.70" width="13.40" height="1.90" fill="#4472c4"/>
<rect x="708.20" y="630.30" width="13.40" height="1.70" fill="#a9d18e"/>
<rect x="708.20" y="558.50" width="13.40" height="71.40" fill="#255e91"/>
<rect x="708.20" y="551.90" width="13.40" height="5.40" fill="#9e480e"/>
<rect x="708.20" y="464.00" width="13.40" height="87.20" fill="#997300"/>
<rect x="708.20" y="386.40" width="13.40" height="76.60" fill="#264478"/>
<rect x="737.20" y="645.70" width="13.40" height="2.30" fill="#ed7d31"/>
<rect x="737.20" y="638.10" width="13.40" height="6.60" fill="#a074a9"/>
<rect x="737.20" y="634.40" width="13.40" height="2.40" fill="#4472c4"/>
<rect x="737.20" y="628.70" width="13.40" height="4.30" fill="#70ad47"/>
<rect x="737.20" y="557.60" width="13.40" height="69.90" fill="#255e91"/>
<rect x="737.20" y="555.00" width="13.40" height="2.00" fill="#e9cdd0"/>
<rect x="737.20" y="471.70" width="13.40" height="81.90" fill="#997300"/>
<rect x="737.20" y="385.30" width="13.40" height="85.50" fill="#264478"/>
<rect x="766.20" y="646.30" width="13.40" height="1.70" fill="#ed7d31"/>
<rect x="766.20" y="637.20" width="13.40" height="7.90" fill="#a074a9"/>
<rect x="766.20" y="634.40" width="13.40" height="1.60" fill="#4472c4"/>
<rect x="766.20" y="630.80" width="13.40" height="2.80" fill="#70ad47"/>
<rect x="766.20" y="565.00" width="13.40" height="64.90" fill="#255e91"/>
<rect x="766.20" y="562.00" width="13.40" height="2.20" fill="#9e480e"/>
<rect x="766.20" y="475.20" width="13.40" height="85.60" fill="#997300"/>
<rect x="766.20" y="413.60" width="13.40" height="60.80" fill="#264478"/>
<rect x="795.20" y="646.60" width="13.40" height="1.60" fill="#f6c9a8"/>
<rect x="795.20" y="636.00" width="13.40" height="9.70" fill="#a074a9"/>
<rect x="795.20" y="632.00" width="13.40" height="2.40" fill="#4472c4"/>
<rect x="795.20" y="629.30" width="13.40" height="2.40" fill="#e7e6a0"/>
<rect x="795.20" y="570.90" width="13.40" height="56.60" fill="#255e91"/>
<rect x="795.20" y="567.30" width="13.40" height="2.20" fill="#9e480e"/>
<rect x="795.20" y="501.30" width="13.40" height="64.20" fill="#997300"/>
<rect x="795.20" y="441.10" width="13.40" height="59.30" fill="#264478"/>
<rect x="824.20" y="647.00" width="13.40" height="1.20" fill="#d9c5de"/>
<rect x="824.20" y="630.30" width="13.40" height="14.80" fill="#255e91"/>
<rect x="824.20" y="628.90" width="13.40" height="0.70" fill="#dfe7f0"/>
<rect x="824.20" y="608.00" width="13.40" height="20.20" fill="#997300"/>
<rect x="824.20" y="593.40" width="13.40" height="13.80" fill="#264478"/>
<text x="627.90" y="650.00" font-size="6.5" fill="#3a3a3a" stroke="#3a3a3a" stroke-width="0.15" text-anchor="middle">54</text>
<text x="627.90" y="638.80" font-size="6.5" fill="#3a3a3a" stroke="#3a3a3a" stroke-width="0.15" text-anchor="middle">221</text>
<text x="627.90" y="628.10" font-size="6.5" fill="#3a3a3a" stroke="#3a3a3a" stroke-width="0.15" text-anchor="middle">42</text>
<text x="627.90" y="617.80" font-size="6.5" fill="#3a3a3a" stroke="#3a3a3a" stroke-width="0.15" text-anchor="middle">217</text>
<text x="627.90" y="566.80" font-size="6.5" fill="#3a3a3a" stroke="#3a3a3a" stroke-width="0.15" text-anchor="middle">1,054</text>
<text x="627.90" y="515.30" font-size="6.5" fill="#3a3a3a" stroke="#3a3a3a" stroke-width="0.15" text-anchor="middle">257</text>
<text x="627.90" y="504.30" font-size="6.5" fill="#3a3a3a" stroke="#3a3a3a" stroke-width="0.15" text-anchor="middle">5</text>
<text x="627.90" y="438.30" font-size="6.5" fill="#3a3a3a" stroke="#3a3a3a" stroke-width="0.15" text-anchor="middle">1,640</text>
<text x="627.90" y="326.30" font-size="6.5" fill="#3a3a3a" stroke="#3a3a3a" stroke-width="0.15" text-anchor="middle">1,187</text>
<text x="656.90" y="646.50" font-size="6.5" fill="#3a3a3a" stroke="#3a3a3a" stroke-width="0.15" text-anchor="middle">88</text>
<text x="656.90" y="631.30" font-size="6.5" fill="#3a3a3a" stroke="#3a3a3a" stroke-width="0.15" text-anchor="middle">212</text>
<text x="656.90" y="588.80" font-size="6.5" fill="#3a3a3a" stroke="#3a3a3a" stroke-width="0.15" text-anchor="middle">845</text>
<text x="656.90" y="550.00" font-size="6.5" fill="#3a3a3a" stroke="#3a3a3a" stroke-width="0.15" text-anchor="middle">137</text>
<text x="656.90" y="518.30" font-size="6.5" fill="#3a3a3a" stroke="#3a3a3a" stroke-width="0.15" text-anchor="middle">622</text>
<text x="656.90" y="451.80" font-size="6.5" fill="#3a3a3a" stroke="#3a3a3a" stroke-width="0.15" text-anchor="middle">1,049</text>
<text x="685.90" y="643.80" font-size="6.5" fill="#3a3a3a" stroke="#3a3a3a" stroke-width="0.15" text-anchor="middle">130</text>
<text x="685.90" y="633.80" font-size="6.5" fill="#3a3a3a" stroke="#3a3a3a" stroke-width="0.15" text-anchor="middle">39</text>
<text x="685.90" y="588.80" font-size="6.5" fill="#3a3a3a" stroke="#3a3a3a" stroke-width="0.15" text-anchor="middle">1,082</text>
<text x="685.90" y="540.60" font-size="6.5" fill="#3a3a3a" stroke="#3a3a3a" stroke-width="0.15" text-anchor="middle">135</text>
<text x="685.90" y="477.30" font-size="6.5" fill="#3a3a3a" stroke="#3a3a3a" stroke-width="0.15" text-anchor="middle">1,441</text>
<text x="685.90" y="379.60" font-size="6.5" fill="#3a3a3a" stroke="#3a3a3a" stroke-width="0.15" text-anchor="middle">1,010</text>
<text x="714.90" y="644.10" font-size="6.5" fill="#3a3a3a" stroke="#3a3a3a" stroke-width="0.15" text-anchor="middle">133</text>
<text x="714.90" y="635.00" font-size="6.5" fill="#3a3a3a" stroke="#3a3a3a" stroke-width="0.15" text-anchor="middle">19</text>
<text x="714.90" y="597.80" font-size="6.5" fill="#3a3a3a" stroke="#3a3a3a" stroke-width="0.15" text-anchor="middle">910</text>
<text x="714.90" y="558.40" font-size="6.5" fill="#3a3a3a" stroke="#3a3a3a" stroke-width="0.15" text-anchor="middle">71</text>
<text x="714.90" y="511.80" font-size="6.5" fill="#3a3a3a" stroke="#3a3a3a" stroke-width="0.15" text-anchor="middle">1,107</text>
<text x="714.90" y="428.80" font-size="6.5" fill="#3a3a3a" stroke="#3a3a3a" stroke-width="0.15" text-anchor="middle">973</text>
<text x="743.90" y="645.20" font-size="6.5" fill="#3a3a3a" stroke="#3a3a3a" stroke-width="0.15" text-anchor="middle">98</text>
<text x="743.90" y="634.80" font-size="6.5" fill="#3a3a3a" stroke="#3a3a3a" stroke-width="0.15" text-anchor="middle">52</text>
<text x="743.90" y="596.30" font-size="6.5" fill="#3a3a3a" stroke="#3a3a3a" stroke-width="0.15" text-anchor="middle">896</text>
<text x="743.90" y="559.80" font-size="6.5" fill="#3a3a3a" stroke="#3a3a3a" stroke-width="0.15" text-anchor="middle">27</text>
<text x="743.90" y="516.40" font-size="6.5" fill="#3a3a3a" stroke="#3a3a3a" stroke-width="0.15" text-anchor="middle">1,049</text>
<text x="743.90" y="431.80" font-size="6.5" fill="#3a3a3a" stroke="#3a3a3a" stroke-width="0.15" text-anchor="middle">1,086</text>
<text x="772.90" y="644.90" font-size="6.5" fill="#3a3a3a" stroke="#3a3a3a" stroke-width="0.15" text-anchor="middle">120</text>
<text x="772.90" y="636.00" font-size="6.5" fill="#3a3a3a" stroke="#3a3a3a" stroke-width="0.15" text-anchor="middle">37</text>
<text x="772.90" y="601.30" font-size="6.5" fill="#3a3a3a" stroke="#3a3a3a" stroke-width="0.15" text-anchor="middle">827</text>
<text x="772.90" y="566.90" font-size="6.5" fill="#3a3a3a" stroke="#3a3a3a" stroke-width="0.15" text-anchor="middle">41</text>
<text x="772.90" y="521.80" font-size="6.5" fill="#3a3a3a" stroke="#3a3a3a" stroke-width="0.15" text-anchor="middle">1,082</text>
<text x="772.90" y="448.30" font-size="6.5" fill="#3a3a3a" stroke="#3a3a3a" stroke-width="0.15" text-anchor="middle">787</text>
<text x="801.90" y="644.60" font-size="6.5" fill="#3a3a3a" stroke="#3a3a3a" stroke-width="0.15" text-anchor="middle">145</text>
<text x="801.90" y="634.30" font-size="6.5" fill="#3a3a3a" stroke="#3a3a3a" stroke-width="0.15" text-anchor="middle">15</text>
<text x="801.90" y="602.80" font-size="6.5" fill="#3a3a3a" stroke="#3a3a3a" stroke-width="0.15" text-anchor="middle">739</text>
<text x="801.90" y="572.20" font-size="6.5" fill="#3a3a3a" stroke="#3a3a3a" stroke-width="0.15" text-anchor="middle">36</text>
<text x="801.90" y="537.20" font-size="6.5" fill="#3a3a3a" stroke="#3a3a3a" stroke-width="0.15" text-anchor="middle">812</text>
<text x="801.90" y="474.50" font-size="6.5" fill="#3a3a3a" stroke="#3a3a3a" stroke-width="0.15" text-anchor="middle">765</text>
<text x="830.90" y="641.50" font-size="6.5" fill="#3a3a3a" stroke="#3a3a3a" stroke-width="0.15" text-anchor="middle">202</text>
<text x="830.90" y="632.30" font-size="6.5" fill="#3a3a3a" stroke="#3a3a3a" stroke-width="0.15" text-anchor="middle">17</text>
<text x="830.90" y="622.10" font-size="6.5" fill="#3a3a3a" stroke="#3a3a3a" stroke-width="0.15" text-anchor="middle">265</text>
<text x="830.90" y="604.10" font-size="6.5" fill="#3a3a3a" stroke="#3a3a3a" stroke-width="0.15" text-anchor="middle">184</text>
<text x="629.70" y="660.80" font-size="8.33" fill="#323130" stroke="#323130" stroke-width="0.2" text-anchor="end" textLength="33.0" lengthAdjust="spacingAndGlyphs" transform="rotate(-45 629.70 660.8)">Jan 2025</text>
<text x="658.70" y="660.80" font-size="8.33" fill="#323130" stroke="#323130" stroke-width="0.2" text-anchor="end" textLength="33.0" lengthAdjust="spacingAndGlyphs" transform="rotate(-45 658.70 660.8)">Feb 2025</text>
<text x="687.70" y="660.80" font-size="8.33" fill="#323130" stroke="#323130" stroke-width="0.2" text-anchor="end" textLength="33.0" lengthAdjust="spacingAndGlyphs" transform="rotate(-45 687.70 660.8)">Mar 2025</text>
<text x="716.70" y="660.80" font-size="8.33" fill="#323130" stroke="#323130" stroke-width="0.2" text-anchor="end" textLength="33.0" lengthAdjust="spacingAndGlyphs" transform="rotate(-45 716.70 660.8)">Apr 2025</text>
<text x="745.70" y="660.80" font-size="8.33" fill="#323130" stroke="#323130" stroke-width="0.2" text-anchor="end" textLength="33.0" lengthAdjust="spacingAndGlyphs" transform="rotate(-45 745.70 660.8)">May 2025</text>
<text x="774.70" y="660.80" font-size="8.33" fill="#323130" stroke="#323130" stroke-width="0.2" text-anchor="end" textLength="33.0" lengthAdjust="spacingAndGlyphs" transform="rotate(-45 774.70 660.8)">Jun 2025</text>
<text x="803.70" y="660.80" font-size="8.33" fill="#323130" stroke="#323130" stroke-width="0.2" text-anchor="end" textLength="33.0" lengthAdjust="spacingAndGlyphs" transform="rotate(-45 803.70 660.8)">Jul 2025</text>
<text x="832.70" y="660.80" font-size="8.33" fill="#323130" stroke="#323130" stroke-width="0.2" text-anchor="end" textLength="33.0" lengthAdjust="spacingAndGlyphs" transform="rotate(-45 832.70 660.8)">Aug 2025</text>
<text x="576.30" y="448.50" font-size="10.83" fill="#323130" stroke="#323130" stroke-width="0.2" text-anchor="middle" textLength="105.5" lengthAdjust="spacingAndGlyphs" transform="rotate(-90 576.3 448.5)">Count:All (Lead Source)</text>
<text x="729.50" y="722.20" font-size="10.83" fill="#323130" stroke="#323130" stroke-width="0.2" text-anchor="middle" textLength="90" lengthAdjust="spacingAndGlyphs">Month (Created On)</text>
<rect x="885.0" y="138" width="677.0999999999999" height="600" rx="3.5" fill="#000" opacity="0.11" filter="url(#sh)"/>
<rect x="884.5" y="137" width="677.0999999999999" height="600" rx="3.5" fill="#fff"/>
<text x="896.90" y="158.30" font-size="12.6" fill="#242424" stroke="#242424" stroke-width="0.33" text-anchor="start" textLength="227.3" lengthAdjust="spacingAndGlyphs">Retail Qualified Leads in Current Fiscal Year</text>
<rect x="890.00" y="170.00" width="660.60" height="1.00" fill="#e6e6e6"/>
<path d="M1465.90 149.20 A5.8 5.8 0 1 0 1470.90 148.70" stroke="#2f86e0" stroke-width="1.05" fill="none"/>
<path d="M1463.90 148.40 L1466.30 148.90 L1465.60 151.40" stroke="#2f86e0" stroke-width="1.05" fill="none"/>
<path d="M1503.70 148.3 H1497.40 V159.6 H1502.60 M1503.70 148.3 L1507.20 151.8 V154.8" stroke="#2f86e0" stroke-width="1.05" fill="none"/>
<path d="M1499.60 151.3 H1503.00 M1499.60 153.0 H1504.80 M1499.60 154.7 H1504.80 M1499.60 156.4 H1502.80" stroke="#2f86e0" stroke-width="0.8" fill="none" opacity="0.8"/>
<circle cx="1505.90" cy="157.6" r="1.7" stroke="#2f86e0" stroke-width="1" fill="none"/>
<path d="M1536.60 151.2 H1530.20 V157.7 H1539.60 V154.4" stroke="#2f86e0" stroke-width="1.05" fill="none"/>
<path d="M1537.20 154.0 L1540.80 150.6" stroke="#2f86e0" stroke-width="1.05" fill="none"/>
<path d="M1538.80 150.0 L1541.50 149.8 L1541.30 152.4 Z" fill="#2f86e0"/>
<text x="897.10" y="197.40" font-size="11.67" fill="#605e5c" text-anchor="start" textLength="234.9" lengthAdjust="spacingAndGlyphs">Incoming Lead Analysis by Month and Source</text>
<path d="M898.9 211.1 L906.3 207.3 V214.9 Z" fill="#555"/>
<path d="M1547 211.1 L1539.6 207.3 V214.9 Z" fill="#555"/>
<circle cx="923.70" cy="211.1" r="3.2" fill="#5b9bd5"/>
<text x="930.90" y="214.80" font-size="11.2" fill="#424242" text-anchor="start" textLength="31.9" lengthAdjust="spacingAndGlyphs">Partner</text>
<circle cx="978.10" cy="211.1" r="3.2" fill="#ed7d31"/>
<text x="985.80" y="214.80" font-size="11.2" fill="#424242" text-anchor="start" textLength="20.2" lengthAdjust="spacingAndGlyphs">Web</text>
<circle cx="1022.20" cy="211.1" r="3.2" fill="#a074a9"/>
<text x="1029.40" y="214.80" font-size="11.2" fill="#424242" text-anchor="start" textLength="69.3" lengthAdjust="spacingAndGlyphs">External referral</text>
<circle cx="1114.50" cy="211.1" r="3.2" fill="#4472c4"/>
<text x="1122.10" y="214.80" font-size="11.2" fill="#424242" text-anchor="start" textLength="68.9" lengthAdjust="spacingAndGlyphs">Signed by clinic</text>
<circle cx="1207.20" cy="211.1" r="3.2" fill="#ffc000"/>
<text x="1214.40" y="214.80" font-size="11.2" fill="#424242" text-anchor="start" textLength="45.9" lengthAdjust="spacingAndGlyphs">Outbound</text>
<circle cx="1276.00" cy="211.1" r="3.2" fill="#70ad47"/>
<text x="1283.70" y="214.80" font-size="11.2" fill="#424242" text-anchor="start" textLength="67.9" lengthAdjust="spacingAndGlyphs">Internal referral</text>
<circle cx="1367.40" cy="211.1" r="3.2" fill="#255e91"/>
<text x="1375.00" y="214.80" font-size="11.2" fill="#424242" text-anchor="start" textLength="20.3" lengthAdjust="spacingAndGlyphs">Chat</text>
<circle cx="1411.00" cy="211.1" r="3.2" fill="#9e480e"/>
<text x="1418.70" y="214.80" font-size="11.2" fill="#424242" text-anchor="start" textLength="24.8" lengthAdjust="spacingAndGlyphs">EMag</text>
<circle cx="1459.60" cy="211.1" r="3.2" fill="#74367c"/>
<text x="1467.30" y="214.80" font-size="11.2" fill="#424242" text-anchor="start" textLength="34.7" lengthAdjust="spacingAndGlyphs">E-SHOP</text>
<circle cx="1517.70" cy="211.1" r="3.2" fill="#997300"/>
<rect x="951.10" y="688.10" width="7.50" height="1.00" fill="#c8cad0"/>
<text x="946.00" y="691.60" font-size="8.33" fill="#323130" stroke="#323130" stroke-width="0.22" text-anchor="end">0</text>
<rect x="959.60" y="630.93" width="579.80" height="1.00" fill="#eef1f5"/>
<rect x="951.10" y="630.93" width="7.50" height="1.00" fill="#c8cad0"/>
<text x="946.00" y="634.43" font-size="8.33" fill="#323130" stroke="#323130" stroke-width="0.22" text-anchor="end">250</text>
<rect x="959.60" y="573.75" width="579.80" height="1.00" fill="#eef1f5"/>
<rect x="951.10" y="573.75" width="7.50" height="1.00" fill="#c8cad0"/>
<text x="946.00" y="577.25" font-size="8.33" fill="#323130" stroke="#323130" stroke-width="0.22" text-anchor="end">500</text>
<rect x="959.60" y="516.58" width="579.80" height="1.00" fill="#eef1f5"/>
<rect x="951.10" y="516.58" width="7.50" height="1.00" fill="#c8cad0"/>
<text x="946.00" y="520.08" font-size="8.33" fill="#323130" stroke="#323130" stroke-width="0.22" text-anchor="end">750</text>
<rect x="959.60" y="459.40" width="579.80" height="1.00" fill="#eef1f5"/>
<rect x="951.10" y="459.40" width="7.50" height="1.00" fill="#c8cad0"/>
<text x="946.00" y="462.90" font-size="8.33" fill="#323130" stroke="#323130" stroke-width="0.22" text-anchor="end">1000</text>
<rect x="959.60" y="402.23" width="579.80" height="1.00" fill="#eef1f5"/>
<rect x="951.10" y="402.23" width="7.50" height="1.00" fill="#c8cad0"/>
<text x="946.00" y="405.73" font-size="8.33" fill="#323130" stroke="#323130" stroke-width="0.22" text-anchor="end">1250</text>
<rect x="959.60" y="345.05" width="579.80" height="1.00" fill="#eef1f5"/>
<rect x="951.10" y="345.05" width="7.50" height="1.00" fill="#c8cad0"/>
<text x="946.00" y="348.55" font-size="8.33" fill="#323130" stroke="#323130" stroke-width="0.22" text-anchor="end">1500</text>
<rect x="959.60" y="287.88" width="579.80" height="1.00" fill="#eef1f5"/>
<rect x="951.10" y="287.88" width="7.50" height="1.00" fill="#c8cad0"/>
<text x="946.00" y="291.38" font-size="8.33" fill="#323130" stroke="#323130" stroke-width="0.22" text-anchor="end">1750</text>
<rect x="959.60" y="230.70" width="579.80" height="1.00" fill="#eef1f5"/>
<rect x="951.10" y="230.70" width="7.50" height="1.00" fill="#c8cad0"/>
<text x="946.00" y="234.20" font-size="8.33" fill="#323130" stroke="#323130" stroke-width="0.22" text-anchor="end">2000</text>
<rect x="958.10" y="230.70" width="1.10" height="458.40" fill="#c3c6cc"/>
<rect x="951.10" y="688.00" width="588.30" height="1.30" fill="#c3c6cc"/>
<rect x="978.00" y="687.60" width="34.20" height="1.00" fill="#5b9bd5"/>
<rect x="978.00" y="679.80" width="34.20" height="7.10" fill="#ed7d31"/>
<rect x="978.00" y="673.80" width="34.20" height="4.80" fill="#a074a9"/>
<rect x="978.00" y="671.20" width="34.20" height="1.70" fill="#ffc000"/>
<rect x="978.00" y="628.00" width="34.20" height="42.60" fill="#70ad47"/>
<rect x="978.00" y="620.10" width="34.20" height="6.80" fill="#255e91"/>
<rect x="978.00" y="259.90" width="34.20" height="358.50" fill="#74367c"/>
<rect x="978.00" y="258.60" width="34.20" height="0.80" fill="#e6d9a6"/>
<rect x="978.00" y="256.20" width="34.20" height="2.30" fill="#997300"/>
<rect x="1050.60" y="686.90" width="34.20" height="1.70" fill="#5b9bd5"/>
<rect x="1050.60" y="683.90" width="34.20" height="2.20" fill="#ed7d31"/>
<rect x="1050.60" y="679.00" width="34.20" height="4.00" fill="#a074a9"/>
<rect x="1050.60" y="674.60" width="34.20" height="3.30" fill="#ffc000"/>
<rect x="1050.60" y="643.70" width="34.20" height="29.70" fill="#70ad47"/>
<rect x="1050.60" y="638.00" width="34.20" height="4.80" fill="#255e91"/>
<rect x="1050.60" y="634.70" width="34.20" height="2.30" fill="#9e480e"/>
<rect x="1050.60" y="633.40" width="34.20" height="0.80" fill="#e9c9b8"/>
<rect x="1050.60" y="493.70" width="34.20" height="139.30" fill="#74367c"/>
<rect x="1050.60" y="490.90" width="34.20" height="2.10" fill="#997300"/>
<rect x="1123.20" y="687.50" width="34.20" height="1.10" fill="#5b9bd5"/>
<rect x="1123.20" y="681.00" width="34.20" height="5.90" fill="#ed7d31"/>
<rect x="1123.20" y="679.00" width="34.20" height="1.50" fill="#c8b0d0"/>
<rect x="1123.20" y="638.10" width="34.20" height="39.60" fill="#70ad47"/>
<rect x="1123.20" y="633.80" width="34.20" height="3.20" fill="#255e91"/>
<rect x="1123.20" y="303.90" width="34.20" height="327.80" fill="#74367c"/>
<rect x="1123.20" y="301.90" width="34.20" height="1.10" fill="#997300"/>
<rect x="1195.80" y="687.50" width="34.20" height="1.10" fill="#5b9bd5"/>
<rect x="1195.80" y="683.00" width="34.20" height="3.90" fill="#ed7d31"/>
<rect x="1195.80" y="677.00" width="34.20" height="4.90" fill="#a074a9"/>
<rect x="1195.80" y="673.80" width="34.20" height="1.30" fill="#ffc000"/>
<rect x="1195.80" y="634.10" width="34.20" height="38.50" fill="#70ad47"/>
<rect x="1195.80" y="631.00" width="34.20" height="1.80" fill="#255e91"/>
<rect x="1195.80" y="377.80" width="34.20" height="251.30" fill="#74367c"/>
<rect x="1195.80" y="374.80" width="34.20" height="2.40" fill="#997300"/>
<rect x="1268.40" y="687.80" width="34.20" height="0.80" fill="#5b9bd5"/>
<rect x="1268.40" y="684.70" width="34.20" height="2.10" fill="#ed7d31"/>
<rect x="1268.40" y="675.90" width="34.20" height="7.50" fill="#a074a9"/>
<rect x="1268.40" y="673.80" width="34.20" height="1.20" fill="#ffc000"/>
<rect x="1268.40" y="636.40" width="34.20" height="36.10" fill="#70ad47"/>
<rect x="1268.40" y="633.60" width="34.20" height="2.20" fill="#a9c3e3"/>
<rect x="1268.40" y="394.80" width="34.20" height="238.10" fill="#74367c"/>
<rect x="1268.40" y="390.50" width="34.20" height="3.50" fill="#997300"/>
<rect x="1341.00" y="687.80" width="34.20" height="0.80" fill="#5b9bd5"/>
<rect x="1341.00" y="683.80" width="34.20" height="3.00" fill="#ed7d31"/>
<rect x="1341.00" y="679.30" width="34.20" height="3.50" fill="#a074a9"/>
<rect x="1341.00" y="675.50" width="34.20" height="2.30" fill="#ffc000"/>
<rect x="1341.00" y="637.00" width="34.20" height="37.70" fill="#70ad47"/>
<rect x="1341.00" y="634.10" width="34.20" height="1.90" fill="#1f4e79"/>
<rect x="1341.00" y="388.20" width="34.20" height="244.40" fill="#74367c"/>
<rect x="1341.00" y="385.90" width="34.20" height="1.50" fill="#997300"/>
<rect x="1413.60" y="687.80" width="34.20" height="0.80" fill="#5b9bd5"/>
<rect x="1413.60" y="682.20" width="34.20" height="4.60" fill="#ed7d31"/>
<rect x="1413.60" y="675.90" width="34.20" height="5.00" fill="#a074a9"/>
<rect x="1413.60" y="645.20" width="34.20" height="29.10" fill="#70ad47"/>
<rect x="1413.60" y="459.80" width="34.20" height="182.90" fill="#74367c"/>
<rect x="1413.60" y="456.50" width="34.20" height="2.30" fill="#997300"/>
<rect x="1486.20" y="685.30" width="34.20" height="2.30" fill="#70ad47"/>
<rect x="1486.20" y="623.80" width="34.20" height="59.00" fill="#74367c"/>
<rect x="1486.20" y="623.00" width="34.20" height="0.80" fill="#997300"/>
<text x="995.10" y="687.20" font-size="6.5" fill="#3a3a3a" stroke="#3a3a3a" stroke-width="0.15" text-anchor="middle">37</text>
<text x="995.10" y="675.80" font-size="6.5" fill="#3a3a3a" stroke="#3a3a3a" stroke-width="0.15" text-anchor="middle">8</text>
<text x="995.10" y="653.10" font-size="6.5" fill="#3a3a3a" stroke="#3a3a3a" stroke-width="0.15" text-anchor="middle">193</text>
<text x="995.10" y="627.30" font-size="6.5" fill="#3a3a3a" stroke="#3a3a3a" stroke-width="0.15" text-anchor="middle">33</text>
<text x="995.10" y="443.00" font-size="6.5" fill="#3a3a3a" stroke="#3a3a3a" stroke-width="0.15" text-anchor="middle">1,576</text>
<text x="995.10" y="261.10" font-size="6.5" fill="#3a3a3a" stroke="#3a3a3a" stroke-width="0.15" text-anchor="middle">14</text>
<text x="1067.70" y="684.80" font-size="6.5" fill="#3a3a3a" stroke="#3a3a3a" stroke-width="0.15" text-anchor="middle">21</text>
<text x="1067.70" y="662.30" font-size="6.5" fill="#3a3a3a" stroke="#3a3a3a" stroke-width="0.15" text-anchor="middle">137</text>
<text x="1067.70" y="644.20" font-size="6.5" fill="#3a3a3a" stroke="#3a3a3a" stroke-width="0.15" text-anchor="middle">25</text>
<text x="1067.70" y="567.20" font-size="6.5" fill="#3a3a3a" stroke="#3a3a3a" stroke-width="0.15" text-anchor="middle">618</text>
<text x="1067.70" y="495.80" font-size="6.5" fill="#3a3a3a" stroke="#3a3a3a" stroke-width="0.15" text-anchor="middle">13</text>
<text x="1140.30" y="687.80" font-size="6.5" fill="#3a3a3a" stroke="#3a3a3a" stroke-width="0.15" text-anchor="middle">28</text>
<text x="1140.30" y="661.70" font-size="6.5" fill="#3a3a3a" stroke="#3a3a3a" stroke-width="0.15" text-anchor="middle">179</text>
<text x="1140.30" y="639.20" font-size="6.5" fill="#3a3a3a" stroke="#3a3a3a" stroke-width="0.15" text-anchor="middle">19</text>
<text x="1140.30" y="471.60" font-size="6.5" fill="#3a3a3a" stroke="#3a3a3a" stroke-width="0.15" text-anchor="middle">1,438</text>
<text x="1140.30" y="306.20" font-size="6.5" fill="#3a3a3a" stroke="#3a3a3a" stroke-width="0.15" text-anchor="middle">9</text>
<text x="1212.90" y="683.30" font-size="6.5" fill="#3a3a3a" stroke="#3a3a3a" stroke-width="0.15" text-anchor="middle">24</text>
<text x="1212.90" y="657.20" font-size="6.5" fill="#3a3a3a" stroke="#3a3a3a" stroke-width="0.15" text-anchor="middle">176</text>
<text x="1212.90" y="635.70" font-size="6.5" fill="#3a3a3a" stroke="#3a3a3a" stroke-width="0.15" text-anchor="middle">11</text>
<text x="1212.90" y="507.30" font-size="6.5" fill="#3a3a3a" stroke="#3a3a3a" stroke-width="0.15" text-anchor="middle">1,104</text>
<text x="1212.90" y="379.80" font-size="6.5" fill="#3a3a3a" stroke="#3a3a3a" stroke-width="0.15" text-anchor="middle">15</text>
<text x="1285.50" y="683.40" font-size="6.5" fill="#3a3a3a" stroke="#3a3a3a" stroke-width="0.15" text-anchor="middle">34</text>
<text x="1285.50" y="658.30" font-size="6.5" fill="#3a3a3a" stroke="#3a3a3a" stroke-width="0.15" text-anchor="middle">167</text>
<text x="1285.50" y="638.50" font-size="6.5" fill="#3a3a3a" stroke="#3a3a3a" stroke-width="0.15" text-anchor="middle">5</text>
<text x="1285.50" y="517.60" font-size="6.5" fill="#3a3a3a" stroke="#3a3a3a" stroke-width="0.15" text-anchor="middle">1,048</text>
<text x="1285.50" y="396.10" font-size="6.5" fill="#3a3a3a" stroke="#3a3a3a" stroke-width="0.15" text-anchor="middle">21</text>
<text x="1358.10" y="684.80" font-size="6.5" fill="#3a3a3a" stroke="#3a3a3a" stroke-width="0.15" text-anchor="middle">18</text>
<text x="1358.10" y="659.70" font-size="6.5" fill="#3a3a3a" stroke="#3a3a3a" stroke-width="0.15" text-anchor="middle">174</text>
<text x="1358.10" y="638.80" font-size="6.5" fill="#3a3a3a" stroke="#3a3a3a" stroke-width="0.15" text-anchor="middle">11</text>
<text x="1358.10" y="514.20" font-size="6.5" fill="#3a3a3a" stroke="#3a3a3a" stroke-width="0.15" text-anchor="middle">1,077</text>
<text x="1358.10" y="390.40" font-size="6.5" fill="#3a3a3a" stroke="#3a3a3a" stroke-width="0.15" text-anchor="middle">7</text>
<text x="1430.70" y="682.20" font-size="6.5" fill="#3a3a3a" stroke="#3a3a3a" stroke-width="0.15" text-anchor="middle">28</text>
<text x="1430.70" y="663.60" font-size="6.5" fill="#3a3a3a" stroke="#3a3a3a" stroke-width="0.15" text-anchor="middle">129</text>
<text x="1430.70" y="647.80" font-size="6.5" fill="#3a3a3a" stroke="#3a3a3a" stroke-width="0.15" text-anchor="middle">3</text>
<text x="1430.70" y="555.10" font-size="6.5" fill="#3a3a3a" stroke="#3a3a3a" stroke-width="0.15" text-anchor="middle">807</text>
<text x="1430.70" y="461.40" font-size="6.5" fill="#3a3a3a" stroke="#3a3a3a" stroke-width="0.15" text-anchor="middle">13</text>
<text x="1503.30" y="690.20" font-size="6.5" fill="#3a3a3a" stroke="#3a3a3a" stroke-width="0.15" text-anchor="middle">12</text>
<text x="1503.30" y="657.10" font-size="6.5" fill="#3a3a3a" stroke="#3a3a3a" stroke-width="0.15" text-anchor="middle">264</text>
<text x="1503.30" y="627.20" font-size="6.5" fill="#3a3a3a" stroke="#3a3a3a" stroke-width="0.15" text-anchor="middle">2</text>
<text x="995.10" y="703.80" font-size="9.17" fill="#323130" stroke="#323130" stroke-width="0.2" text-anchor="middle" textLength="34.9" lengthAdjust="spacingAndGlyphs">Jan 2025</text>
<text x="1067.70" y="703.80" font-size="9.17" fill="#323130" stroke="#323130" stroke-width="0.2" text-anchor="middle" textLength="34.9" lengthAdjust="spacingAndGlyphs">Feb 2025</text>
<text x="1140.30" y="703.80" font-size="9.17" fill="#323130" stroke="#323130" stroke-width="0.2" text-anchor="middle" textLength="34.9" lengthAdjust="spacingAndGlyphs">Mar 2025</text>
<text x="1212.90" y="703.80" font-size="9.17" fill="#323130" stroke="#323130" stroke-width="0.2" text-anchor="middle" textLength="34.9" lengthAdjust="spacingAndGlyphs">Apr 2025</text>
<text x="1285.50" y="703.80" font-size="9.17" fill="#323130" stroke="#323130" stroke-width="0.2" text-anchor="middle" textLength="34.9" lengthAdjust="spacingAndGlyphs">May 2025</text>
<text x="1358.10" y="703.80" font-size="9.17" fill="#323130" stroke="#323130" stroke-width="0.2" text-anchor="middle" textLength="34.9" lengthAdjust="spacingAndGlyphs">Jun 2025</text>
<text x="1430.70" y="703.80" font-size="9.17" fill="#323130" stroke="#323130" stroke-width="0.2" text-anchor="middle" textLength="34.9" lengthAdjust="spacingAndGlyphs">Jul 2025</text>
<text x="1503.30" y="703.80" font-size="9.17" fill="#323130" stroke="#323130" stroke-width="0.2" text-anchor="middle" textLength="34.9" lengthAdjust="spacingAndGlyphs">Aug 2025</text>
<text x="920.30" y="460.00" font-size="10.83" fill="#323130" stroke="#323130" stroke-width="0.2" text-anchor="middle" textLength="105.5" lengthAdjust="spacingAndGlyphs" transform="rotate(-90 920.3 460)">Count:All (Lead Source)</text>
<text x="1249.10" y="722.30" font-size="10.83" fill="#323130" stroke="#323130" stroke-width="0.2" text-anchor="middle" textLength="90.8" lengthAdjust="spacingAndGlyphs">Month (Created On)</text>
<rect x="194" y="750.5" width="332" height="20" rx="4" fill="#fff"/>
<rect x="539.5" y="750.5" width="331.5" height="20" rx="4" fill="#fff"/>
<rect x="884.5" y="750.5" width="677.0999999999999" height="20" rx="4" fill="#fff"/>
</svg></body></html>
